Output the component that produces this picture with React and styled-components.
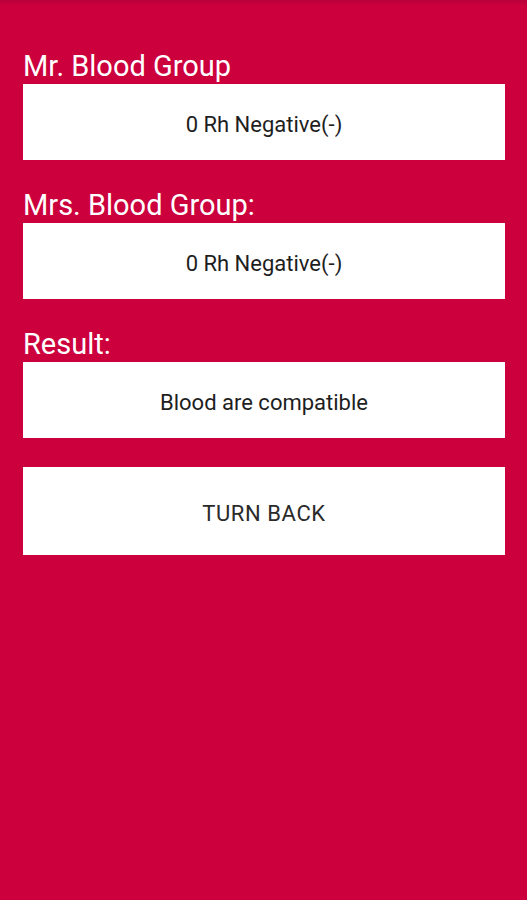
import React from "react";
import styled, { createGlobalStyle } from "styled-components";

const GlobalStyle = createGlobalStyle`
  html, body {
    margin: 0;
    padding: 0;
    background: #cc003d;
  }
  * { box-sizing: border-box; }
`;

const Screen = styled.div`
  width: 527px;
  height: 900px;
  background: linear-gradient(180deg, #b8003a 0px, #cc003d 6px);
  padding: 52px 22px 0 23px;
  display: flex;
  flex-direction: column;
  font-family: Roboto, "Liberation Sans", sans-serif;
`;

const Section = styled.div`
  display: flex;
  flex-direction: column;
  margin-bottom: ${({ last }) => (last ? "29px" : "31px")};
`;

const Label = styled.div`
  color: #ffffff;
  font-size: 29px;
  line-height: 32px;
  height: 32px;
  margin-top: -2px;
  margin-bottom: 2px;
`;

const ValueBox = styled.div`
  background: #ffffff;
  height: 76px;
  display: flex;
  align-items: center;
  justify-content: center;
  color: #1e1e1e;
  font-size: 22px;
  padding-top: 4px;
`;

const BackButton = styled.button`
  background: #ffffff;
  border: none;
  height: 88px;
  width: 100%;
  font-family: Roboto, "Liberation Sans", sans-serif;
  font-size: 22px;
  color: #2a2a2a;
  text-transform: uppercase;
  letter-spacing: 0.6px;
  cursor: pointer;
  padding: 4px 0 0;
`;

const rows = [
  { label: "Mr. Blood Group", value: "0 Rh Negative(-)" },
  { label: "Mrs. Blood Group:", value: "0 Rh Negative(-)" },
  { label: "Result:", value: "Blood are compatible" },
];

function App() {
  return (
    <>
      <GlobalStyle />
      <Screen>
        {rows.map((row, i) => (
          <Section key={row.label} last={i === rows.length - 1}>
            <Label>{row.label}</Label>
            <ValueBox>{row.value}</ValueBox>
          </Section>
        ))}
        <BackButton>Turn Back</BackButton>
      </Screen>
    </>
  );
}

export default App;
